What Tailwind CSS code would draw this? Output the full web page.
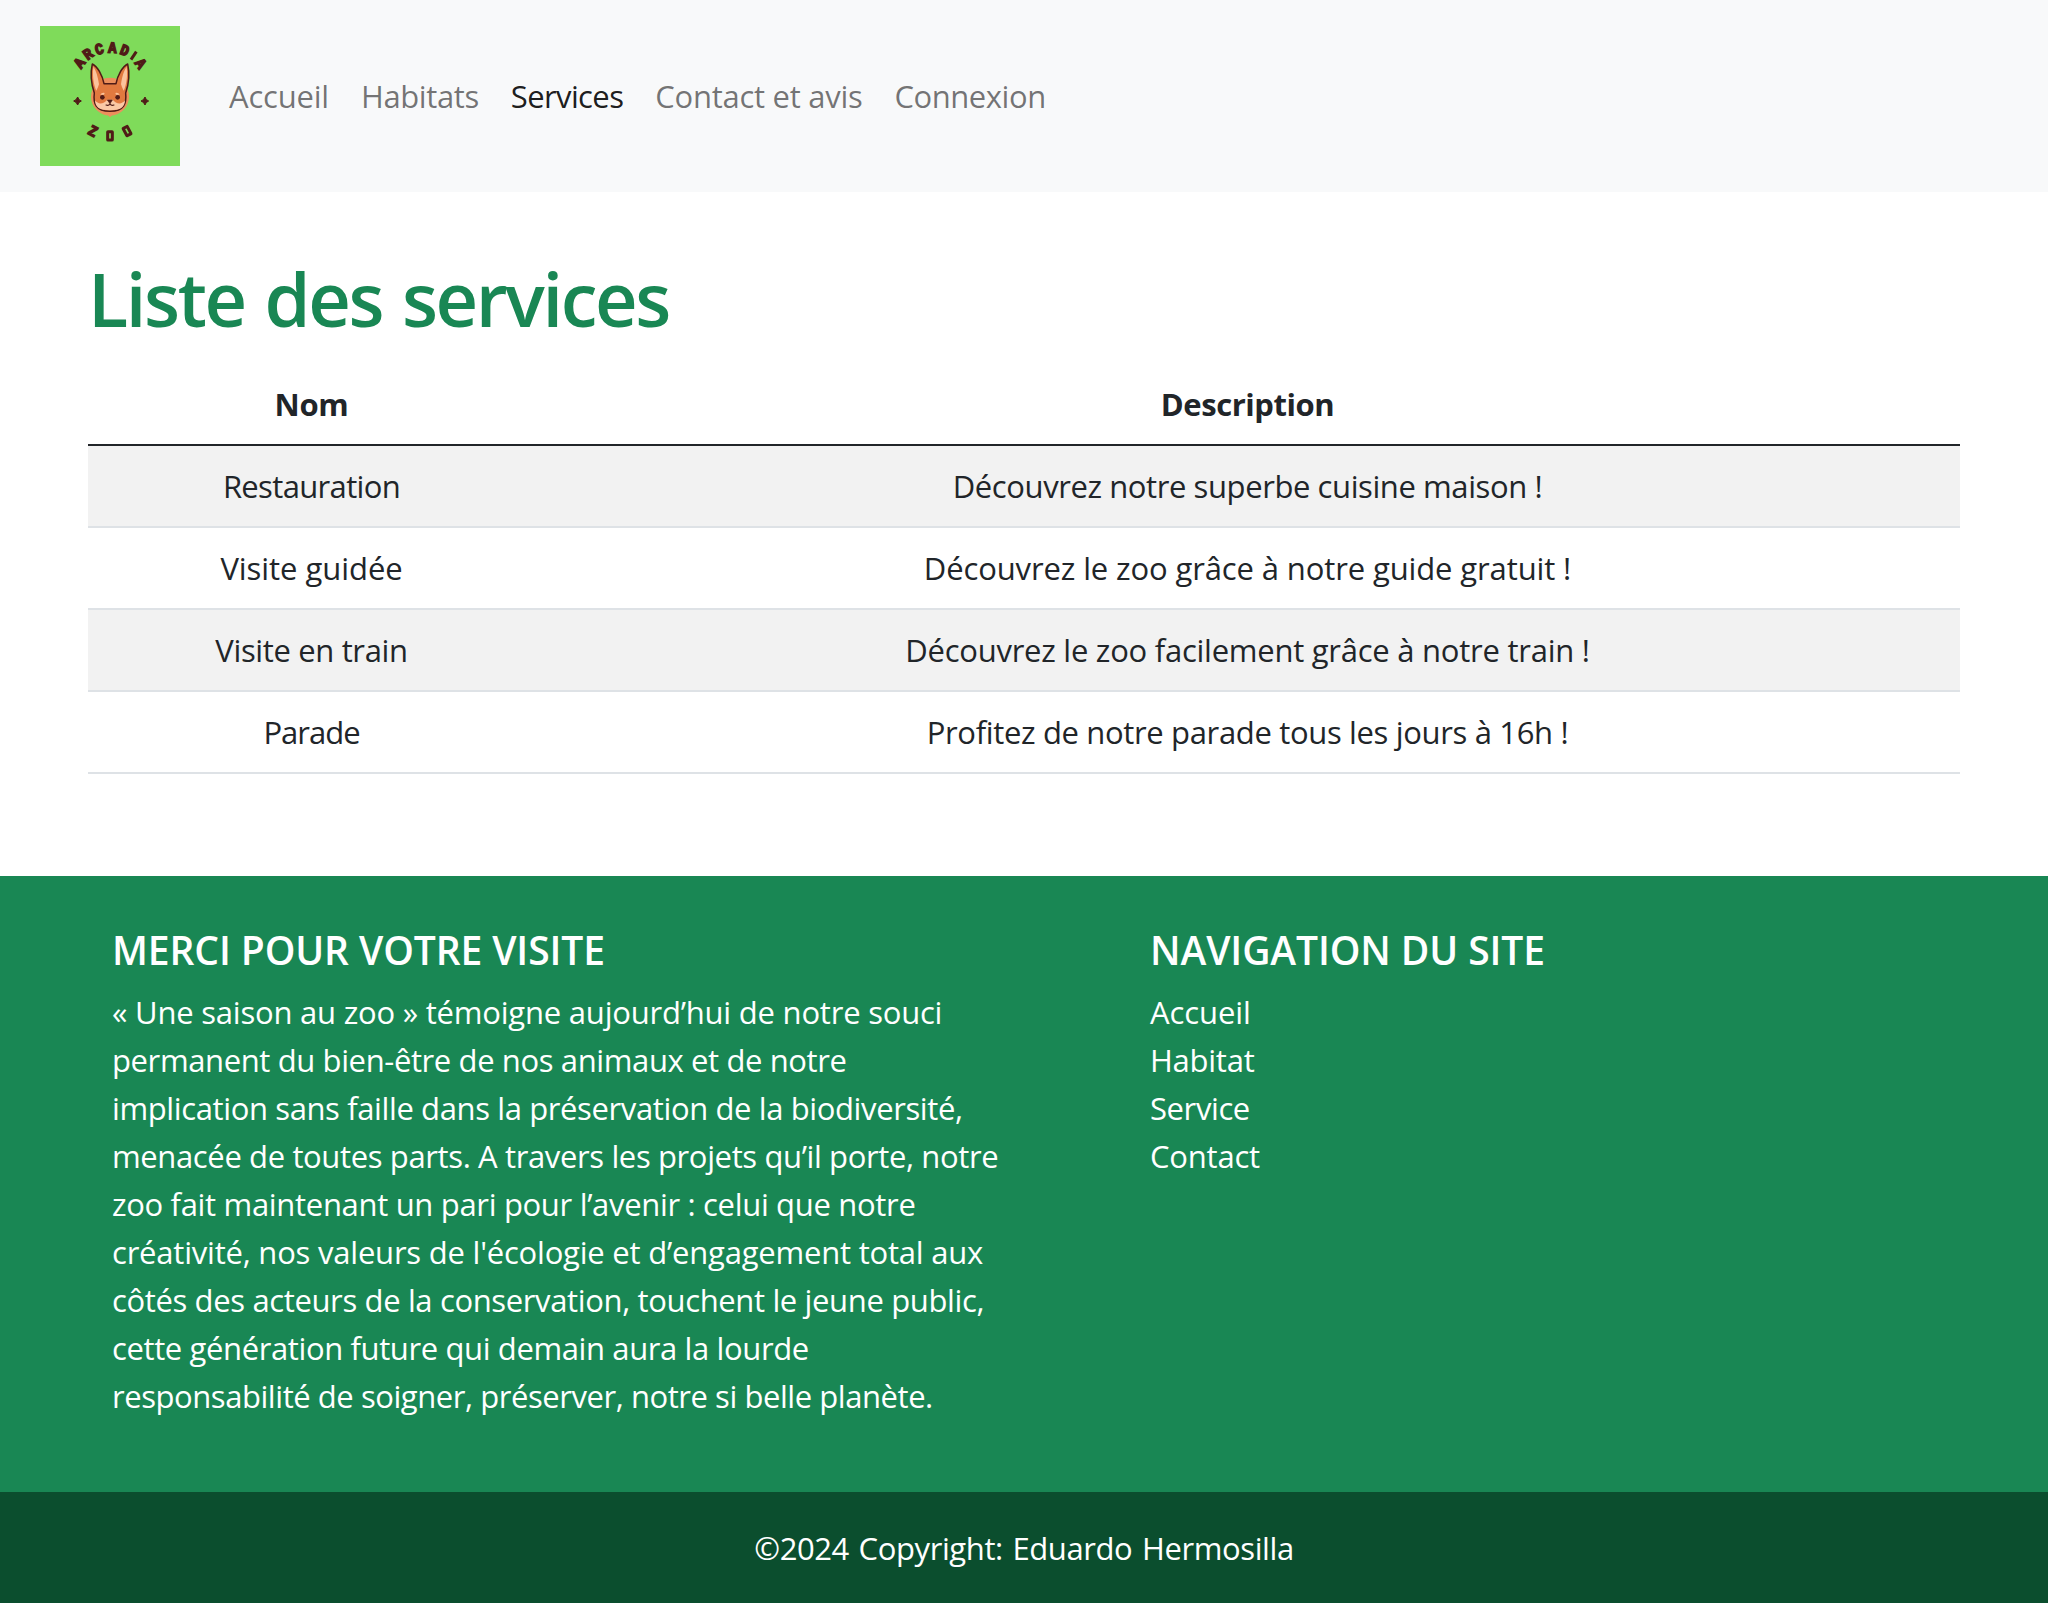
<!DOCTYPE html>
<html lang="fr">
<head>
<meta charset="utf-8">
<title>Arcadia Zoo - Services</title>
<script src="https://cdn.jsdelivr.net/npm/@tailwindcss/browser@4"></script>
</head>
<body class="bg-white font-['Open_Sans',sans-serif] text-[31px] leading-[48px] text-[#212529]">
<header class="flex h-[192px] items-center bg-[#f8f9fa] pl-10">
  <a href="#" class="mr-[49px] block">
    <svg class="block size-[140px]" viewBox="30 30 420 420">
      <rect x="30" y="30" width="420" height="420" fill="#7fdb5a"/>
      <g fill="#501b17" stroke="#501b17" stroke-width="4.500" font-family="Liberation Mono, monospace" font-weight="700" font-size="46" text-anchor="middle">
        <text transform="translate(148 141) rotate(-54)" y="15" textLength="25" lengthAdjust="spacingAndGlyphs">A</text>
        <text transform="translate(174 114) rotate(-36)" y="15" textLength="25" lengthAdjust="spacingAndGlyphs">R</text>
        <text transform="translate(208 99) rotate(-15)" y="15" textLength="25" lengthAdjust="spacingAndGlyphs">C</text>
        <text transform="translate(247 95) rotate(3)" y="15" textLength="25" lengthAdjust="spacingAndGlyphs">A</text>
        <text transform="translate(284 103) rotate(21)" y="15" textLength="25" lengthAdjust="spacingAndGlyphs">D</text>
        <path d="M319 107L303 131" stroke-width="9"/>
        <text transform="translate(332 142) rotate(54)" y="15" textLength="25" lengthAdjust="spacingAndGlyphs">A</text>
        <text transform="translate(189 345) rotate(28)" y="15" textLength="25" lengthAdjust="spacingAndGlyphs">Z</text>
      </g>
      <g fill="none" stroke="#501b17" stroke-width="9">
        <rect x="233" y="347" width="14" height="25" rx="1"/>
        <rect x="284" y="333" width="14" height="25" rx="1" transform="rotate(-28 290.500 345)"/>
      </g>
      <path d="M143 243Q145 252 154 255Q145 258 143 267Q140 258 131 255Q140 252 143 243ZM345 243Q347 252 356 255Q347 258 345 267Q342 258 333 255Q342 252 345 243Z" fill="#501b17" stroke="#501b17" stroke-width="3"/>
      <circle cx="240" cy="242" r="57" fill="#ec8f5c"/>
      <path d="M233 296L240 304L247 296Z" fill="#ec8f5c"/>
      <path d="M187 144C181 170 184 205 193 231C189 262 197 286 240 286C283 286 290 262 287 231C296 205 299 170 293 144C277 152 263 178 258 203H222C217 178 203 152 187 144Z" fill="#e2793f" stroke="#501b17" stroke-width="4.500" stroke-linejoin="round"/>
      <path d="M190 152C187 178 190 205 199 224C204 214 205 211 207 205C204 182 198 163 190 152ZM290 152C293 178 290 205 281 224C276 214 275 211 273 205C276 182 282 163 290 152Z" fill="#fbc39c"/>
      <path d="M195 253C206 268 222 263 232 251H248C258 263 274 268 285 253C284 274 272 283 240 283C208 283 196 274 195 253Z" fill="#fbc9a6"/>
      <path d="M211 236Q215 229 224 231L222 236ZM256 231Q265 229 269 236L258 236Z" fill="#fbc39c"/>
      <circle cx="217" cy="244" r="7" fill="#501b17"/>
      <circle cx="263" cy="244" r="7" fill="#501b17"/>
      <path d="M232 252H247L240 263Z" fill="#501b17" stroke="#501b17" stroke-width="2" stroke-linejoin="round"/>
      <path d="M227 266Q235 271 240 264Q245 271 253 266" fill="none" stroke="#501b17" stroke-width="3.500"/>
    </svg>
  </a>
  <nav class="flex gap-8 whitespace-nowrap text-black/55">
    <a href="#" class="tracking-[-0.2px]">Accueil</a>
    <a href="#" class="tracking-[-0.4px]">Habitats</a>
    <a href="#" class="tracking-[-0.61px] text-black/90">Services</a>
    <a href="#" class="tracking-[-0.27px]">Contact et avis</a>
    <a href="#" class="tracking-[-0.46px]">Connexion</a>
  </nav>
</header>
<main class="px-[88px] pt-[59px] pb-[102px]">
  <h1 class="mb-[17px] text-[74px] leading-[96px] font-[550] tracking-[-2.4px] [word-spacing:3px] text-[#198754]">Liste des services</h1>
  <table class="w-full table-fixed border-separate border-spacing-0 text-center whitespace-nowrap">
    <colgroup><col class="w-[447px]"><col></colgroup>
    <thead>
      <tr class="font-bold">
        <th class="border-b-2 border-[#212529] py-4 tracking-[-0.35px]">Nom</th>
        <th class="border-b-2 border-[#212529] py-4 tracking-[-0.45px]">Description</th>
      </tr>
    </thead>
    <tbody>
      <tr class="bg-[#f2f2f2]">
        <td class="border-b-2 border-[#dee2e6] py-4 tracking-[-0.65px]">Restauration</td>
        <td class="border-b-2 border-[#dee2e6] py-4 tracking-[-0.41px]">Découvrez notre superbe cuisine maison !</td>
      </tr>
      <tr>
        <td class="border-b-2 border-[#dee2e6] py-4 tracking-[-0.05px]">Visite guidée</td>
        <td class="border-b-2 border-[#dee2e6] py-4 tracking-[-0.12px]">Découvrez le zoo grâce à notre guide gratuit !</td>
      </tr>
      <tr class="bg-[#f2f2f2]">
        <td class="border-b-2 border-[#dee2e6] py-4 tracking-[-0.35px]">Visite en train</td>
        <td class="border-b-2 border-[#dee2e6] py-4 tracking-[-0.25px]">Découvrez le zoo facilement grâce à notre train !</td>
      </tr>
      <tr>
        <td class="border-b-2 border-[#dee2e6] py-4 tracking-[-1px]">Parade</td>
        <td class="border-b-2 border-[#dee2e6] py-4 tracking-[-0.34px]">Profitez de notre parade tous les jours à 16h !</td>
      </tr>
    </tbody>
  </table>
</main>
<footer class="bg-[#198754] whitespace-nowrap text-white">
  <div class="flex px-28 pt-[50px] pb-[72px]">
    <section class="w-[1038px]">
      <h5 class="mb-[14px] text-[39px] font-[550] tracking-[-0.1px]">MERCI POUR VOTRE VISITE</h5>
      <p>
        <span class="block tracking-[-0.21px]">« Une saison au zoo » témoigne aujourd’hui de notre souci</span>
        <span class="block tracking-[-0.38px]">permanent du bien-être de nos animaux et de notre</span>
        <span class="block tracking-[-0.38px]">implication sans faille dans la préservation de la biodiversité,</span>
        <span class="block tracking-[-0.37px]">menacée de toutes parts. A travers les projets qu’il porte, notre</span>
        <span class="block tracking-[-0.32px]">zoo fait maintenant un pari pour l’avenir : celui que notre</span>
        <span class="block tracking-[-0.21px]">créativité, nos valeurs de l'écologie et d’engagement total aux</span>
        <span class="block tracking-[-0.36px]">côtés des acteurs de la conservation, touchent le jeune public,</span>
        <span class="block tracking-[-0.38px]">cette génération future qui demain aura la lourde</span>
        <span class="block tracking-[-0.44px]">responsabilité de soigner, préserver, notre si belle planète.</span>
      </p>
    </section>
    <section>
      <h5 class="mb-[14px] text-[39px] font-[550] tracking-[-0.1px]">NAVIGATION DU SITE</h5>
      <ul>
        <li><a href="#" class="tracking-[-0.07px]">Accueil</a></li>
        <li><a href="#" class="tracking-[-0.25px]">Habitat</a></li>
        <li><a href="#" class="tracking-[-0.4px]">Service</a></li>
        <li><a href="#" class="tracking-[-0.2px]">Contact</a></li>
      </ul>
    </section>
  </div>
  <div class="h-[111px] bg-[#0b4e2e] pt-8 text-center tracking-[-0.4px] [word-spacing:2px]">©2024 Copyright: Eduardo Hermosilla</div>
</footer>
</body>
</html>
